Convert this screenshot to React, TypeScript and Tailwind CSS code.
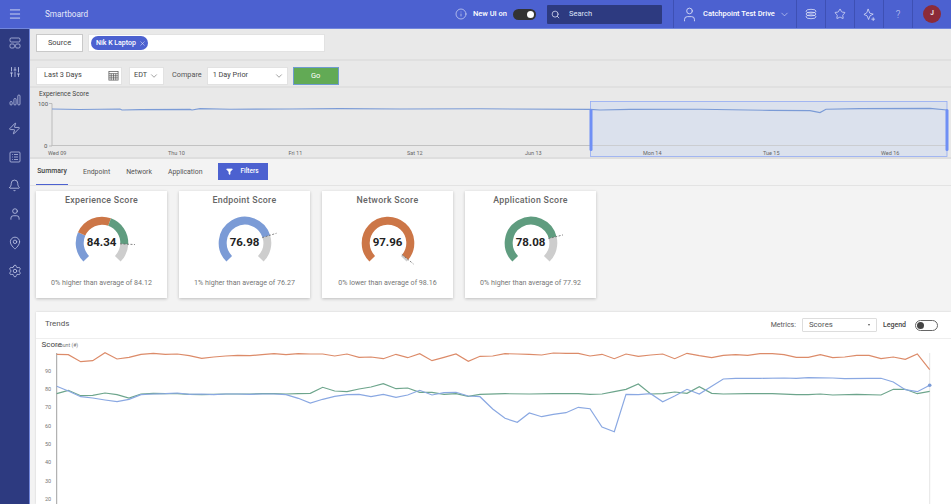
import { ChevronDown, Info, Search, X, Filter, Star, Zap, Bell, Settings, MapPin, SlidersVertical, Menu, User } from "lucide-react";

function toXY(cx: number, cy: number, r: number, deg: number) {
  const a = ((deg - 90) * Math.PI) / 180;
  return [cx + r * Math.cos(a), cy + r * Math.sin(a)];
}

function arc(from: number, to: number) {
  const [x1, y1] = toXY(40, 40, 22.3, from);
  const [x2, y2] = toXY(40, 40, 22.3, to);
  return `M${x1} ${y1}A22.3 22.3 0 ${to - from > 180 ? 1 : 0} 1 ${x2} ${y2}`;
}

const BLUE = "#7b9bd6";
const ORANGE = "#cc7647";
const GREEN = "#5f9c7f";

const cards = [
  { title: "Experience Score", value: "84.34", note: "0% higher than average of 84.12", segs: [[-135, -66, BLUE], [-66, 20, ORANGE], [20, 92.7, GREEN]], mark: 92.7 },
  { title: "Endpoint Score", value: "76.98", note: "1% higher than average of 76.27", segs: [[-135, 72.8, BLUE]], mark: 72.8 },
  { title: "Network Score", value: "97.96", note: "0% lower than average of 98.16", segs: [[-135, 129.5, ORANGE]], mark: 129.5 },
  { title: "Application Score", value: "78.08", note: "0% higher than average of 77.92", segs: [[-135, 75.8, GREEN]], mark: 75.8 },
] as { title: string; value: string; note: string; segs: [number, number, string][]; mark: number }[];

function ScoreCard({ card }: { card: (typeof cards)[number] }) {
  const [mx1, my1] = toXY(40, 40, 18, card.mark);
  const [mx2, my2] = toXY(40, 40, 33, card.mark);
  return (
    <div className="w-[131px] h-[107px] bg-white shadow-[0_1px_3px_rgba(0,0,0,0.22)] flex flex-col items-center">
      <div className="text-[8.8px] font-medium text-[#666] tracking-[0.3px] mt-[2px] leading-[14px]">{card.title}</div>
      <div className="relative w-[80px] h-[80px] -mt-[4px] -mb-[6px] shrink-0">
        <svg viewBox="0 0 80 80" className="w-[80px] h-[80px]">
          <path d={arc(card.mark, 135)} fill="none" stroke="#cdcdcd" strokeWidth={8} />
          {card.segs.map((s, i) => (
            <path key={i} d={arc(s[0], s[1])} fill="none" stroke={s[2]} strokeWidth={8} />
          ))}
          <line x1={mx1} y1={my1} x2={mx2} y2={my2} stroke="#666" strokeWidth={0.8} strokeDasharray="2 1.5" />
        </svg>
        <div className="absolute inset-0 flex items-center justify-center text-[11.5px] font-bold text-[#222]">{card.value}</div>
      </div>
      <div className="text-[7.1px] text-[#777] leading-[10px] mt-[1px] whitespace-nowrap">{card.note}</div>
    </div>
  );
}

const L = (a: number[][]) => a.map((p) => [p[0] / 3, p[1] / 3 + 310]);
const R = (a: number[][]) => a.map((p) => [p[0] / 3 + 480, p[1] / 3 + 310]);
const pts = (a: number[][]) => a.map((p) => `${p[0].toFixed(1)},${p[1].toFixed(1)}`).join(" ");

const orange = [
  ...L([[170,133],[205,134],[242,155],[278,152],[315,128],[351,147],[387,142],[423,133],[460,130],[496,133],[532,132],[568,137],[605,145],[641,141],[677,138],[713,136],[750,137],[786,134],[822,131],[858,134],[895,131],[931,132],[968,132],[1004,138],[1041,132],[1077,142],[1113,141],[1150,146],[1188,133],[1223,143],[1259,131],[1296,152],[1332,142],[1368,132],[1405,154]]),
  ...R([[0,139],[38,138],[75,131],[112,132],[148,133],[185,135],[220,129],[258,130],[295,130],[330,138],[366,133],[403,146],[438,132],[475,139],[512,135],[548,132],[584,146],[621,130],[658,137],[695,143],[730,136],[767,134],[803,136],[840,131],[877,131],[912,134],[949,142],[985,142],[1021,134],[1058,143],[1094,141],[1130,136],[1167,136],[1203,146],[1240,141],[1276,148],[1312,132],[1349,179]]),
];
const green = [
  ...L([[170,251],[205,241],[242,257],[278,256],[315,249],[351,254],[387,264],[423,252],[460,250],[496,251],[532,251],[568,253],[605,254],[641,253],[677,252],[713,252],[750,252],[786,251],[822,251],[858,252],[895,251],[931,250],[968,232],[1004,243],[1041,245],[1077,237],[1113,231],[1150,221],[1188,236],[1223,234],[1259,247],[1296,247],[1332,253],[1368,251],[1405,259]]),
  ...R([[0,253],[75,251],[148,252],[220,251],[295,251],[330,253],[366,252],[403,245],[438,238],[475,222],[512,252],[548,251],[584,246],[621,250],[658,230],[695,250],[730,252],[803,251],[877,251],[949,254],[985,254],[1021,252],[1058,255],[1130,253],[1203,255],[1240,238],[1276,238],[1312,251],[1349,244]]),
];
const blue = [
  ...L([[170,229],[205,243],[242,260],[278,264],[315,270],[351,275],[387,268],[423,254],[460,252],[496,251],[532,249],[568,253],[605,252],[641,254],[677,252],[713,252],[750,253],[786,252],[822,252],[858,254],[895,265],[931,279],[968,268],[1004,259],[1041,254],[1077,253],[1113,260],[1150,253],[1188,262],[1223,255],[1259,241],[1296,255],[1332,248],[1368,247],[1405,258]]),
  ...R([[0,260],[38,297],[75,325],[112,337],[148,309],[185,320],[220,313],[258,308],[295,292],[330,296],[366,351],[403,365],[438,253],[475,254],[512,251],[548,275],[584,258],[621,238],[658,252],[695,229],[730,207],[767,205],[840,205],[912,204],[949,205],[985,203],[1058,204],[1094,206],[1167,205],[1203,205],[1240,216],[1276,239],[1312,245],[1349,226]]),
];

const mini = "52,109 80,109.5 120,109 122,110 140,109.6 190,109.4 192,110 200,108.6 230,109.2 290,109 340,108.6 400,109 480,108.8 590,109.4 600,110 630,109.4 700,109.2 770,110.4 810,110.6 820,112.6 826,109.2 860,108.6 930,108.4 947,110";

function SideIcon({ children }: { children: React.ReactNode }) {
  return <div className="h-[28.5px] flex items-center justify-center text-[#c9d0ee]">{children}</div>;
}

function TopCell({ children }: { children: React.ReactNode }) {
  return <div className="w-[29px] h-full border-l border-[#3e50b4] flex items-center justify-center text-[#dfe3f8]">{children}</div>;
}

export default function App() {
  return (
    <div className="w-[951px] h-[504px] overflow-hidden flex flex-col font-['Roboto',sans-serif] bg-[#f3f3f3]">
      {/* top bar */}
      <header className="h-[29px] shrink-0 bg-[#4c61d0] border-b border-[#7186dc] flex items-center text-white">
        <div className="w-[29px] flex justify-center text-[#d5daf2]">
          <Menu size={14} strokeWidth={1.6} />
        </div>
        <div className="ml-[16px] text-[8.2px] text-[#e6e9fa]">Smartboard</div>
        <div className="ml-auto flex items-center h-full">
          <Info size={12} strokeWidth={1.3} className="text-[#dfe3f8]" />
          <span className="ml-[6px] text-[7.5px] font-medium">New UI on</span>
          <div className="ml-[6px] w-[23px] h-[11px] rounded-full bg-[#333] flex items-center justify-end pr-[2px]">
            <div className="w-[7px] h-[7px] rounded-full bg-white" />
          </div>
          <div className="ml-[11px] w-[115px] h-[19px] rounded-[1px] bg-[#2d3a80] flex items-center pl-[4px] text-[#dfe3f8]">
            <Search size={9} strokeWidth={2} />
            <span className="ml-[9px] text-[7.5px]">Search</span>
          </div>
          <div className="ml-[11px] h-full border-l border-[#3e50b4] w-[123px] flex items-center pl-[7px]">
            <User size={17} strokeWidth={1.2} className="text-[#dfe3f8]" />
            <span className="ml-[5px] text-[7.5px] font-medium whitespace-nowrap">Catchpoint Test Drive</span>
            <ChevronDown size={11} strokeWidth={1.3} className="ml-[4px] text-[#dfe3f8]" />
          </div>
          <TopCell>
            <svg viewBox="0 0 12 12" className="w-[12px] h-[12px]" fill="none" stroke="currentColor" strokeWidth="0.8">
              <ellipse cx="6" cy="3.2" rx="5" ry="1.9" />
              <ellipse cx="6" cy="6" rx="5" ry="1.9" />
              <ellipse cx="6" cy="8.8" rx="5" ry="1.9" />
            </svg>
          </TopCell>
          <TopCell>
            <Star size={12} strokeWidth={1.5} />
          </TopCell>
          <TopCell>
            <svg viewBox="0 0 14 14" className="w-[13px] h-[13px]" fill="none" stroke="currentColor" strokeWidth="0.8">
              <path d="M5.5 1L7.3 5.6 11 6.6 7.6 8.4 6 12.4 4.4 8.4 1 7 4.2 5z" />
              <path d="M11 10v4M9 12h4" />
            </svg>
          </TopCell>
          <TopCell>
            <span className="text-[10px] font-light text-[#c7cef0]">?</span>
          </TopCell>
          <div className="w-[39px] h-full border-l border-[#3e50b4] flex items-center justify-center">
            <div className="w-[18px] h-[18px] rounded-full bg-[#8c2b38] flex items-center justify-center text-[6.5px] font-bold text-[#eee]">J</div>
          </div>
        </div>
      </header>

      <div className="flex flex-1 min-h-0">
        {/* side nav */}
        <aside className="w-[30px] shrink-0 bg-[#2d3a80] border-r border-[#7186dc] flex flex-col">
          <SideIcon>
            <svg viewBox="0 0 12 12" className="w-[12px] h-[12px]" fill="none" stroke="currentColor" strokeWidth="0.7">
              <rect x="1" y="1" width="10" height="4" rx="1.2" />
              <rect x="1" y="7" width="4.4" height="4" rx="1.2" />
              <rect x="6.6" y="7" width="4.4" height="4" rx="1.2" />
            </svg>
          </SideIcon>
          <SideIcon>
            <SlidersVertical size={12} strokeWidth={1.6} />
          </SideIcon>
          <SideIcon>
            <svg viewBox="0 0 12 12" className="w-[12px] h-[12px]" fill="none" stroke="currentColor" strokeWidth="0.7">
              <rect x="1" y="7.5" width="2.2" height="3.5" rx="1" />
              <rect x="4.9" y="4.5" width="2.2" height="6.5" rx="1" />
              <rect x="8.8" y="1" width="2.2" height="10" rx="1" />
            </svg>
          </SideIcon>
          <SideIcon>
            <Zap size={13} strokeWidth={1.4} />
          </SideIcon>
          <SideIcon>
            <svg viewBox="0 0 12 12" className="w-[12px] h-[12px]" fill="none" stroke="currentColor" strokeWidth="0.7">
              <rect x="1" y="1" width="10" height="10" rx="1" />
              <path d="M3 3.5h.8M3 6h.8M3 8.5h.8M5 3.5h4M5 6h4M5 8.5h4" />
            </svg>
          </SideIcon>
          <SideIcon>
            <Bell size={13} strokeWidth={1.4} />
          </SideIcon>
          <SideIcon>
            <User size={14} strokeWidth={1.3} />
          </SideIcon>
          <SideIcon>
            <MapPin size={14} strokeWidth={1.3} />
          </SideIcon>
          <SideIcon>
            <Settings size={14} strokeWidth={1.3} />
          </SideIcon>
        </aside>

        <main className="flex-1 min-w-0 flex flex-col">
          {/* source row */}
          <div className="h-[32px] shrink-0 bg-[#e9e9e9] border-b-2 border-[#e0e0e0] flex items-center pl-[6px] pb-[2px]">
            <button className="w-[47px] h-[18px] bg-white border border-[#c9c9c9] text-[7.5px] text-[#444]">Source</button>
            <div className="ml-[5px] w-[237px] h-[18px] bg-white border border-[#e2e2e2] flex items-center pl-[2px]">
              <span className="h-[14px] w-[57px] rounded-full bg-[#4c61d0] text-white text-[7px] font-medium flex items-center pl-[5px]">
                Nik K Laptop
                <X size={7} strokeWidth={1.5} className="ml-[3px]" />
              </span>
            </div>
          </div>

          {/* date row */}
          <div className="h-[27px] shrink-0 bg-[#e9e9e9] border-b-2 border-[#e0e0e0] flex items-center pl-[6px] pt-[4px] text-[7.3px] text-[#444]">
            <div className="w-[86px] h-[18px] bg-white border border-[#e2e2e2] flex items-center pl-[7px] pr-[2px] justify-between">
              Last 3 Days
              <svg viewBox="0 0 12 12" className="w-[11px] h-[11px]" fill="none" stroke="#555" strokeWidth="0.8">
                <rect x="1" y="1.5" width="10" height="9.5" />
                <path d="M1 4h10M1 6.3h10M1 8.6h10M3.5 4v7M6 4v7M8.5 4v7" />
              </svg>
            </div>
            <div className="ml-[7px] w-[35px] h-[18px] bg-white border border-[#e2e2e2] flex items-center pl-[4px]">
              EDT
              <ChevronDown size={10} strokeWidth={1.2} className="ml-[2px]" />
            </div>
            <span className="ml-[8px] text-[#555]">Compare</span>
            <div className="ml-[5px] w-[81px] h-[18px] bg-white border border-[#e2e2e2] flex items-center pl-[5px] pr-[3px] justify-between">
              1 Day Prior
              <ChevronDown size={10} strokeWidth={1.2} />
            </div>
            <button className="ml-[5px] w-[46px] h-[18px] bg-[#62aa55] border border-[#6f9bd0] text-white text-[7.5px]">Go</button>
          </div>

          {/* overview chart */}
          <div className="h-[71px] shrink-0 bg-[#e9e9e9] border-b-2 border-[#dedede]">
            <svg viewBox="30 88 921 69" className="w-[921px] h-[69px]">
              <text x="39" y="96" fontSize="6.5" fill="#444">Experience Score</text>
              <text x="38" y="106" fontSize="6" fill="#555">100</text>
              <text x="44" y="148" fontSize="6" fill="#555">0</text>
              <path d="M49 103.5h3V146h-3M52 145.5H947" fill="none" stroke="#aaa" strokeWidth="0.7" />
              <rect x="590.5" y="101.5" width="356.5" height="55" fill="#dbe1ed" stroke="#92abf4" strokeWidth="0.8" />
              <path d="M52 145.5H947" stroke="#c4c4c4" strokeWidth="0.7" />
              <polyline points={mini} fill="none" stroke="#7b9bd6" strokeWidth="1.1" />
              <rect x="589.5" y="109" width="3" height="42" rx="1.5" fill="#6f8ff5" />
              <rect x="945.5" y="109" width="3" height="42" rx="1.5" fill="#6f8ff5" />
              {[["Wed 09", 48], ["Thu 10", 168], ["Fri 11", 288.5], ["Sat 12", 407], ["Jun 13", 525], ["Mon 14", 643], ["Tue 15", 763], ["Wed 16", 881]].map(([t, x]) => (
                <text key={t} x={x} y="155" fontSize="5.5" fill="#666">{t}</text>
              ))}
            </svg>
          </div>

          {/* tabs */}
          <div className="h-[27px] shrink-0 bg-[#f3f3f3] border-b border-[#e3e3e3] flex items-center pl-[6px] text-[6.9px] text-[#555]">
            <div className="w-[32px] h-full flex items-center justify-center border-b border-[#4c61d0] font-medium text-[#444]">Summary</div>
            <span className="ml-[15px]">Endpoint</span>
            <span className="ml-[16px]">Network</span>
            <span className="ml-[16px]">Application</span>
            <button className="ml-[15px] w-[50px] h-[17px] bg-[#4c61d0] text-white text-[6.5px] font-medium flex items-center justify-center gap-[7px] mb-[1px]">
              <Filter size={7} fill="white" />
              Filters
            </button>
          </div>

          {/* score cards */}
          <div className="flex gap-[12px] pl-[6px] pt-[5px] pb-[14px] shrink-0">
            {cards.map((c) => (
              <ScoreCard key={c.title} card={c} />
            ))}
          </div>

          {/* trends */}
          <section className="ml-[6px] flex-1 min-h-0 bg-white shadow-[0_0_2px_rgba(0,0,0,0.15)]">
            <div className="h-[27px] border-b border-[#eee] flex items-center pl-[9px] pr-[13px] text-[#555]">
              <span className="text-[8px] mb-[3px]">Trends</span>
              <span className="ml-auto text-[7px]">Metrics:</span>
              <div className="ml-[6px] w-[75px] h-[14px] bg-white border border-[#ddd] rounded-[1px] flex items-center justify-between px-[6px] text-[7.8px]">
                Scores
                <span className="w-0 h-0 border-x-[1.5px] border-x-transparent border-t-[2px] border-t-[#555]" />
              </div>
              <span className="ml-[6px] text-[7px] font-medium text-[#444]">Legend</span>
              <div className="ml-[9px] w-[23px] h-[11px] rounded-full border border-[#666] bg-white flex items-center pl-[1px]">
                <div className="w-[7px] h-[7px] rounded-full bg-[#444]" />
              </div>
            </div>
            <svg viewBox="36 339 915 165" className="w-[915px] h-[165px]">
              <text x="41.5" y="346.5" fontSize="8" fill="#444">Score</text>
              <text x="57" y="346.5" fontSize="5.2" fill="#777">count (#)</text>
              {[90, 80, 70, 60, 50, 40, 30, 20].map((n, i) => (
                <text key={n} x="45" y={372.5 + i * 18.35} fontSize="5.5" fill="#777">{n}</text>
              ))}
              <line x1="56.7" y1="353" x2="56.7" y2="504" stroke="#888" strokeWidth="0.8" />
              <line x1="929.7" y1="353" x2="929.7" y2="504" stroke="#ddd" strokeWidth="0.8" />
              <polyline points={pts(orange)} fill="none" stroke="#dc8b69" strokeWidth="1.2" />
              <polyline points={pts(green)} fill="none" stroke="#6da58c" strokeWidth="1.2" />
              <polyline points={pts(blue)} fill="none" stroke="#8aa8e2" strokeWidth="1.2" />
              <circle cx="929.7" cy="385.3" r="1.8" fill="#7b9bd6" />
            </svg>
          </section>
        </main>
      </div>
    </div>
  );
}
